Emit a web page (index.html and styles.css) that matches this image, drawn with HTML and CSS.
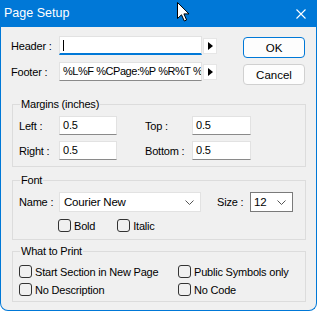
FILE: index.html
```html
<!DOCTYPE html>
<html lang="en">
<head>
  <meta charset="UTF-8" />
  <title>Page Setup</title>
  <link rel="stylesheet" href="styles.css">
</head>
<body>
  <div class="window">
    <div class="titlebar">
      <span class="title">Page Setup</span>
      <svg class="close" width="10" height="10" viewBox="0 0 10 10">
        <path d="M0.5 0.5 L9.5 9.5 M9.5 0.5 L0.5 9.5" stroke="#fff" stroke-width="1.1" fill="none"/>
      </svg>
    </div>

    <div class="content">
      <div class="top">
        <div class="fields">
          <div class="field-row">
            <span class="lbl">Header :</span>
            <div class="input text-field focused"><span class="caret"></span></div>
            <span class="arrow-btn"><svg width="5" height="8" viewBox="0 0 5 8"><path d="M0 0 L5 4 L0 8 Z" fill="#000"/></svg></span>
          </div>
          <div class="field-row">
            <span class="lbl">Footer :</span>
            <div class="input text-field footer-text">%L%F %CPage:%P %R%T %D</div>
            <span class="arrow-btn"><svg width="5" height="8" viewBox="0 0 5 8"><path d="M0 0 L5 4 L0 8 Z" fill="#000"/></svg></span>
          </div>
        </div>
        <div class="buttons">
          <button class="btn default">OK</button>
          <button class="btn">Cancel</button>
        </div>
      </div>

      <fieldset class="group">
        <legend>Margins (inches)</legend>
        <div class="margin-grid">
          <span class="lbl">Left :</span>
          <div class="input num">0.5</div>
          <span class="lbl m-lbl2">Top :</span>
          <div class="input num">0.5</div>
          <span class="lbl">Right :</span>
          <div class="input num">0.5</div>
          <span class="lbl m-lbl2">Bottom :</span>
          <div class="input num">0.5</div>
        </div>
      </fieldset>

      <fieldset class="group font-group">
        <legend>Font</legend>
        <div class="font-row">
          <span class="lbl m-lbl">Name :</span>
          <div class="combo name-combo">Courier New
            <svg class="chev" width="9" height="5" viewBox="0 0 9 5"><path d="M0.5 0.5 L4.5 4.5 L8.5 0.5" stroke="#555" fill="none"/></svg>
          </div>
          <span class="lbl size-lbl">Size :</span>
          <div class="combo size-combo">12
            <svg class="chev" width="9" height="5" viewBox="0 0 9 5"><path d="M0.5 0.5 L4.5 4.5 L8.5 0.5" stroke="#555" fill="none"/></svg>
          </div>
        </div>
        <div class="style-row">
          <label class="check"><span class="box"></span>Bold</label>
          <label class="check italic-check"><span class="box"></span>Italic</label>
        </div>
      </fieldset>

      <fieldset class="group print-group">
        <legend>What to Print</legend>
        <div class="print-grid">
          <label class="check"><span class="box"></span>Start Section in New Page</label>
          <label class="check"><span class="box"></span>Public Symbols only</label>
          <label class="check"><span class="box"></span>No Description</label>
          <label class="check"><span class="box"></span>No Code</label>
        </div>
      </fieldset>
    </div>

    <svg class="pointer" width="13" height="20" viewBox="0 0 13 20">
      <path d="M0.5 0.5 L0.5 16.5 L4.5 12.8 L7.3 19 L9.6 18 L6.9 11.9 L12 11.9 Z" fill="#fff" stroke="#000" stroke-width="1" stroke-linejoin="round"/>
    </svg>
  </div>
</body>
</html>
```

FILE: styles.css
```css
* {
  margin: 0;
  padding: 0;
  box-sizing: border-box;
}

body {
  font-family: 'Liberation Sans', Arial, sans-serif;
  font-size: 11px;
  letter-spacing: -0.2px;
  color: #000;
  background: #fff;
}

.window {
  position: relative;
  width: 317px;
  height: 311px;
  background: #f0f0f0;
  border: 1px solid #0078d7;
  border-top: none;
  border-radius: 0 0 8px 8px;
  overflow: hidden;
}

.titlebar {
  height: 27px;
  background: #0078d7;
  display: flex;
  align-items: center;
  justify-content: space-between;
  padding: 0 10px 1px 3px;
  color: #fff;
}

.title {
  font-size: 12.5px;
  letter-spacing: 0;
}

.close {
  margin-top: 1px;
}

.content {
  padding: 9px 10px 0 10px;
}

/* header / footer + buttons */
.top {
  display: flex;
  align-items: flex-start;
}

.fields {
  display: flex;
  flex-direction: column;
  gap: 7px;
}

.field-row {
  display: flex;
  align-items: center;
}

.field-row .lbl {
  width: 48px;
}

.input {
  background: #fff;
  border: 1px solid #e2e2e2;
  border-bottom-color: #8a8a8a;
  height: 19px;
  line-height: 17px;
  padding-left: 3px;
  white-space: nowrap;
  overflow: hidden;
}

.text-field {
  width: 143px;
}

.footer-text {
  letter-spacing: -0.45px;
}

.text-field.focused {
  border-bottom: 2px solid #0078d7;
  display: flex;
  align-items: center;
}

.caret {
  width: 1px;
  height: 11px;
  background: #000;
  margin-top: 1px;
}

.arrow-btn {
  width: 14px;
  height: 16px;
  margin-left: 1px;
  background: #fff;
  border: 1px solid #e6e6e6;
  display: flex;
  align-items: center;
  justify-content: center;
}

.buttons {
  display: flex;
  flex-direction: column;
  gap: 6px;
  margin-left: 26px;
  margin-top: 1px;
}

.btn {
  width: 62px;
  height: 21px;
  font-family: inherit;
  font-size: 11.5px;
  color: #000;
  background: #fdfdfd;
  border: 1px solid #d0d0d0;
  border-radius: 4px;
}

.btn.default {
  border-color: #0078d7;
}

/* group boxes */
.group {
  border: 1px solid #dcdcdc;
  padding: 5px 6px 6px 6px;
  margin-top: 13px;
  width: 294px;
  margin-left: 1px;
}

.group legend {
  line-height: 13px;
  padding: 0 1px;
  margin-left: 1px;
}

.margin-grid {
  display: grid;
  grid-template-columns: 40px 58px 75px 59px;
  grid-auto-rows: 19px;
  row-gap: 6px;
  align-items: center;
}

.margin-grid .m-lbl2 {
  margin-left: 28px;
  white-space: nowrap;
}

.font-group {
  margin-top: 7px;
  padding-bottom: 7px;
}

.font-row {
  display: flex;
  align-items: center;
}

.font-row .m-lbl {
  width: 40px;
}

.combo {
  position: relative;
  background: #fff;
  border: 1px solid #e2e2e2;
  height: 20px;
  line-height: 18px;
  padding-left: 4px;
  font-size: 11.5px;
}

.name-combo {
  width: 142px;
}

.size-combo {
  width: 43px;
  border-color: #7a7a7a;
  padding-left: 3px;
}

.chev {
  position: absolute;
  right: 6px;
  top: 7px;
}

.size-lbl {
  width: 33px;
  margin-left: 16px;
}

.style-row {
  display: flex;
  margin-top: 7px;
  padding-left: 39px;
}

.italic-check {
  margin-left: 22px;
}

.check {
  display: flex;
  align-items: center;
  height: 13px;
  white-space: nowrap;
}

.box {
  width: 13px;
  height: 13px;
  border: 1px solid #333;
  border-radius: 3px;
  margin-right: 3px;
}

.print-group {
  margin-top: 5px;
  padding-bottom: 5px;
}

.print-grid {
  display: grid;
  grid-template-columns: 159px auto;
  row-gap: 5px;
  padding-top: 2px;
}

.pointer {
  position: absolute;
  left: 176px;
  top: 2px;
}
```
